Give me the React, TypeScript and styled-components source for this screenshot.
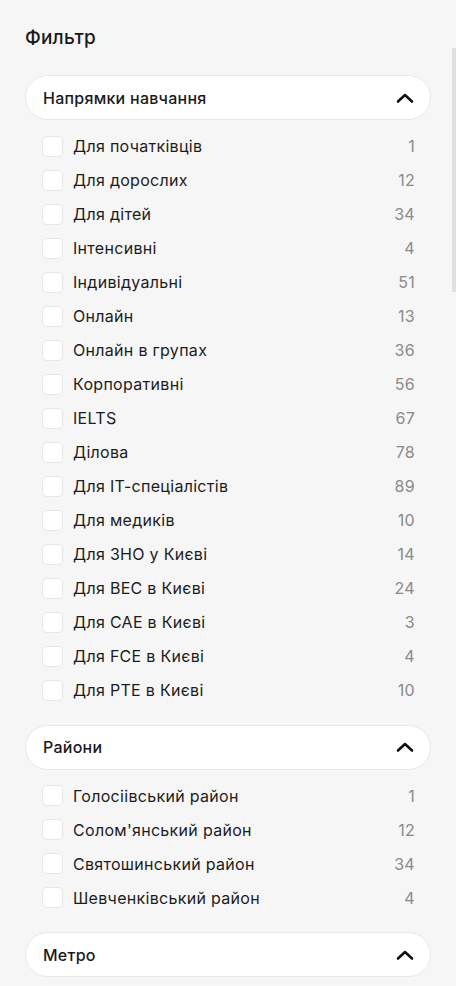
import React from "react";
import styled, { createGlobalStyle } from "styled-components";

const Global = createGlobalStyle`
  html, body { margin: 0; padding: 0; background: #f6f6f6; }
  body { font-family: "Inter", "Noto Sans", sans-serif; color: #1a1a1a; }
  * { box-sizing: border-box; }
`;

const Page = styled.div`
  position: relative;
  width: 456px;
  min-height: 986px;
  padding: 26px 25px 0 25px;
  background: #f6f6f6;
`;

const Scroll = styled.div`
  position: absolute;
  right: 0;
  top: 48px;
  width: 4px;
  height: 244px;
  background: #e0e0e0;
`;

const Title = styled.h2`
  margin: 0 0 25px 0;
  font-size: 19px;
  font-weight: 500;
  line-height: 24px;
  letter-spacing: 0.2px;
`;

const Section = styled.section`
  display: flex;
  flex-direction: column;
  margin-bottom: 17.5px;
`;

const Header = styled.div`
  display: flex;
  align-items: center;
  justify-content: space-between;
  width: 406px;
  height: 45px;
  padding: 0 16px 0 17px;
  background: #fff;
  border: 1px solid #e8e8e8;
  border-radius: 23px;
  font-size: 16px;
  font-weight: 500;
  letter-spacing: 0.25px;
`;

const List = styled.div`
  display: flex;
  flex-direction: column;
  padding: 9px 16px 0 17px;
`;

const Row = styled.label`
  display: flex;
  align-items: center;
  height: 34px;
  font-size: 16px;
  font-weight: 400;
  color: #1c1c1c;
  letter-spacing: 0.3px;
`;

const Box = styled.span`
  width: 21px;
  height: 21px;
  border: 1px solid #e6e6e6;
  border-radius: 5px;
  background: #fff;
  margin-right: 10px;
  flex-shrink: 0;
`;

const Label = styled.span`
  flex: 1;
`;

const Count = styled.span`
  color: #8a8a8a;
  font-size: 16px;
`;

const Chevron = () => (
  <svg width="18" height="12" viewBox="0 0 18 12" fill="none">
    <path d="M2 9.5 L9 3 L16 9.5" stroke="#111" strokeWidth="2.6" strokeLinecap="round" strokeLinejoin="round" />
  </svg>
);

const directions: [string, number][] = [
  ["Для початківців", 1],
  ["Для дорослих", 12],
  ["Для дітей", 34],
  ["Інтенсивні", 4],
  ["Індивідуальні", 51],
  ["Онлайн", 13],
  ["Онлайн в групах", 36],
  ["Корпоративні", 56],
  ["IELTS", 67],
  ["Ділова", 78],
  ["Для IT-спеціалістів", 89],
  ["Для медиків", 10],
  ["Для ЗНО у Києві", 14],
  ["Для BEC в Києві", 24],
  ["Для CAE в Києві", 3],
  ["Для FCE в Києві", 4],
  ["Для PTE в Києві", 10],
];

const districts: [string, number][] = [
  ["Голосіівський район", 1],
  ["Солом'янський район", 12],
  ["Святошинський район", 34],
  ["Шевченківський район", 4],
];

const Group = ({ title, items }: { title: string; items: [string, number][] }) => (
  <Section>
    <Header>
      <span>{title}</span>
      <Chevron />
    </Header>
    {items.length > 0 && (
      <List>
        {items.map(([l, c]) => (
          <Row key={l}>
            <Box />
            <Label>{l}</Label>
            <Count>{c}</Count>
          </Row>
        ))}
      </List>
    )}
  </Section>
);

export default function App() {
  return (
    <Page>
      <Global />
      <Scroll />
      <Title>Фильтр</Title>
      <Group title="Напрямки навчання" items={directions} />
      <Group title="Райони" items={districts} />
      <Group title="Метро" items={[]} />
    </Page>
  );
}
